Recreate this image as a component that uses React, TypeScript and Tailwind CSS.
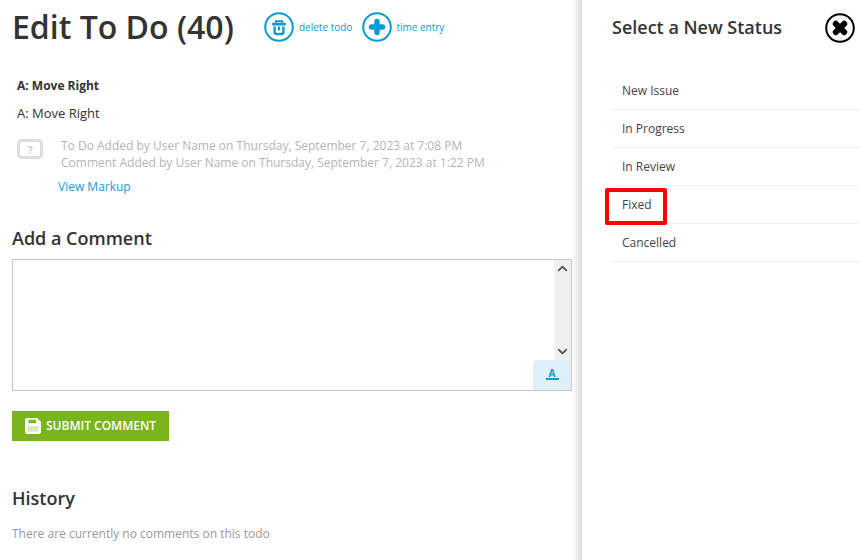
import { ChevronDown, ChevronUp } from 'lucide-react';

const statuses = ['New Issue', 'In Progress', 'In Review', 'Fixed', 'Cancelled'];

function TrashIcon() {
    return (
        <svg width="30" height="30" viewBox="0 0 30 30" fill="none">
            <circle cx="15" cy="15" r="13.800" stroke="#0c9ad7" strokeWidth="2" />
            <path d="M11.800 11V9.200h6.400V11" stroke="#0c9ad7" strokeWidth="1.800" />
            <rect x="8" y="10.800" width="14" height="2.600" rx="1" fill="#0c9ad7" />
            <path d="M10.600 14.500v5.500a2 2 0 0 0 2 2h4.800a2 2 0 0 0 2-2v-5.500" stroke="#0c9ad7" strokeWidth="2.400" />
            <path d="M15 14.500v4" stroke="#0c9ad7" strokeWidth="2.400" />
        </svg>
    );
}

function PlusIcon() {
    return (
        <svg width="30" height="30" viewBox="0 0 30 30" fill="none">
            <circle cx="15" cy="15" r="13.800" stroke="#0c9ad7" strokeWidth="2" />
            <path d="M15 9.500v11M9.500 15h11" stroke="#0c9ad7" strokeWidth="5.500" strokeLinecap="round" />
        </svg>
    );
}

function CloseIcon() {
    return (
        <svg width="30" height="30" viewBox="0 0 30 30" fill="none">
            <circle cx="15" cy="15" r="13.800" stroke="#000" strokeWidth="2" />
            <path d="M10.800 10.800l8.400 8.400M19.200 10.800l-8.400 8.400" stroke="#000" strokeWidth="6" strokeLinecap="round" />
        </svg>
    );
}

function SaveIcon() {
    return (
        <svg width="16" height="16" viewBox="0 0 16 16" fill="none">
            <path d="M2.500 0h9.500L16 4v9.500a2.500 2.500 0 0 1-2.500 2.500h-11A2.500 2.500 0 0 1 0 13.500v-11A2.500 2.500 0 0 1 2.500 0z" fill="#fff" />
            <rect x="3.500" y="1.800" width="7.500" height="3.400" fill="#7ab51d" />
            <rect x="2.200" y="8" width="11.600" height="5.800" rx="0.500" fill="#dcebc2" />
        </svg>
    );
}

function CommentIcon() {
    return (
        <div className="w-[26px] h-[20px] mt-[2px] border-[3px] border-[#dedede] rounded-[5px] flex items-center justify-center text-[11px] font-bold text-[#d0d0d0] leading-none">
            ?
        </div>
    );
}

export default function App() {
    return (
        <div className="relative w-[862px] h-[560px] overflow-hidden bg-white flex font-['Open_Sans',sans-serif] text-[#333]">
            <main className="w-[582px] shrink-0 pl-3 pr-[10px] bg-gradient-to-r from-white from-[98.3%] to-[#dcdcdc]">
                <div className="flex items-center h-[54px]">
                    <h1 className="text-[32px] leading-[54px] font-semibold text-[#333] w-[252px]">Edit To Do (40)</h1>
                    <a className="flex items-center gap-[5px] text-[10px] text-[#0c9ad7]">
                        <TrashIcon />
                        delete todo
                    </a>
                    <a className="flex items-center gap-[4px] text-[10px] text-[#0c9ad7] ml-[10px]">
                        <PlusIcon />
                        time entry
                    </a>
                </div>

                <div className="pl-[5px] mt-[22px]">
                    <p className="text-xs leading-5 font-bold">A: Move Right</p>
                    <p className="text-[13px] leading-5 mt-[7px]">A: Move Right</p>
                </div>

                <div className="flex pl-[5px] mt-[14px]">
                    <CommentIcon />
                    <div className="ml-[18px] text-xs leading-[17px] text-[#b5b5b5]">
                        <p>To Do Added by User Name on Thursday, September 7, 2023 at 7:08 PM</p>
                        <p>Comment Added by User Name on Thursday, September 7, 2023 at 1:22 PM</p>
                    </div>
                </div>
                <a className="block ml-[46px] mt-[7px] text-xs leading-[18px] text-[#1a9ad6]">View Markup</a>

                <h2 className="text-[18px] leading-6 font-semibold mt-[30px] text-[#333]">Add a Comment</h2>

                <div className="relative mt-[9px] w-[560px] h-[132px] border border-[#c8c8c8] bg-white">
                    <div className="absolute right-0 top-0 bottom-0 w-[17px] bg-[#efefef] flex flex-col items-center justify-between pt-[1px] pb-[31px] text-[#555]">
                        <ChevronUp size={15} strokeWidth={3} />
                        <ChevronDown size={15} strokeWidth={3} />
                    </div>
                    <div className="absolute right-0 bottom-0 w-[38px] h-[30px] pb-[3px] bg-[#dff0fa] rounded-tl-[3px] flex flex-col items-center justify-center">
                        <span className="text-[10px] leading-[10px] font-bold text-[#0c9ad7]">A</span>
                        <span className="w-[13px] h-[2px] bg-[#0c9ad7]" />
                    </div>
                </div>

                <button className="flex items-center gap-[5px] mt-[20px] w-[157px] h-[30px] pl-[13px] bg-[#7ab51d] text-white text-xs font-semibold uppercase">
                    <SaveIcon />
                    Submit Comment
                </button>

                <h2 className="text-[18px] leading-6 font-semibold mt-[45px] text-[#333]">History</h2>
                <p className="text-xs leading-[18px] text-[#999] mt-[15px]">There are currently no comments on this todo</p>
            </main>

            <aside className="flex-1 pl-[30px] pr-[2px]">
                <div className="flex items-center justify-between h-[54px]">
                    <h2 className="text-lg font-semibold text-[#333]">Select a New Status</h2>
                    <span className="mr-[5px] mt-[1px]"><CloseIcon /></span>
                </div>
                <ul className="mt-[18px]">
                    {statuses.map((status) => (
                        <li key={status} className="h-[38px] pl-[10px] flex items-center text-xs text-[#444] border-b border-[#eeeeee]">
                            {status}
                        </li>
                    ))}
                </ul>
            </aside>

            <div className="absolute left-[605px] top-[188px] w-[62px] h-[37px] border-[4px] border-[#ff0000] rounded-[2px]" />
        </div>
    );
}
